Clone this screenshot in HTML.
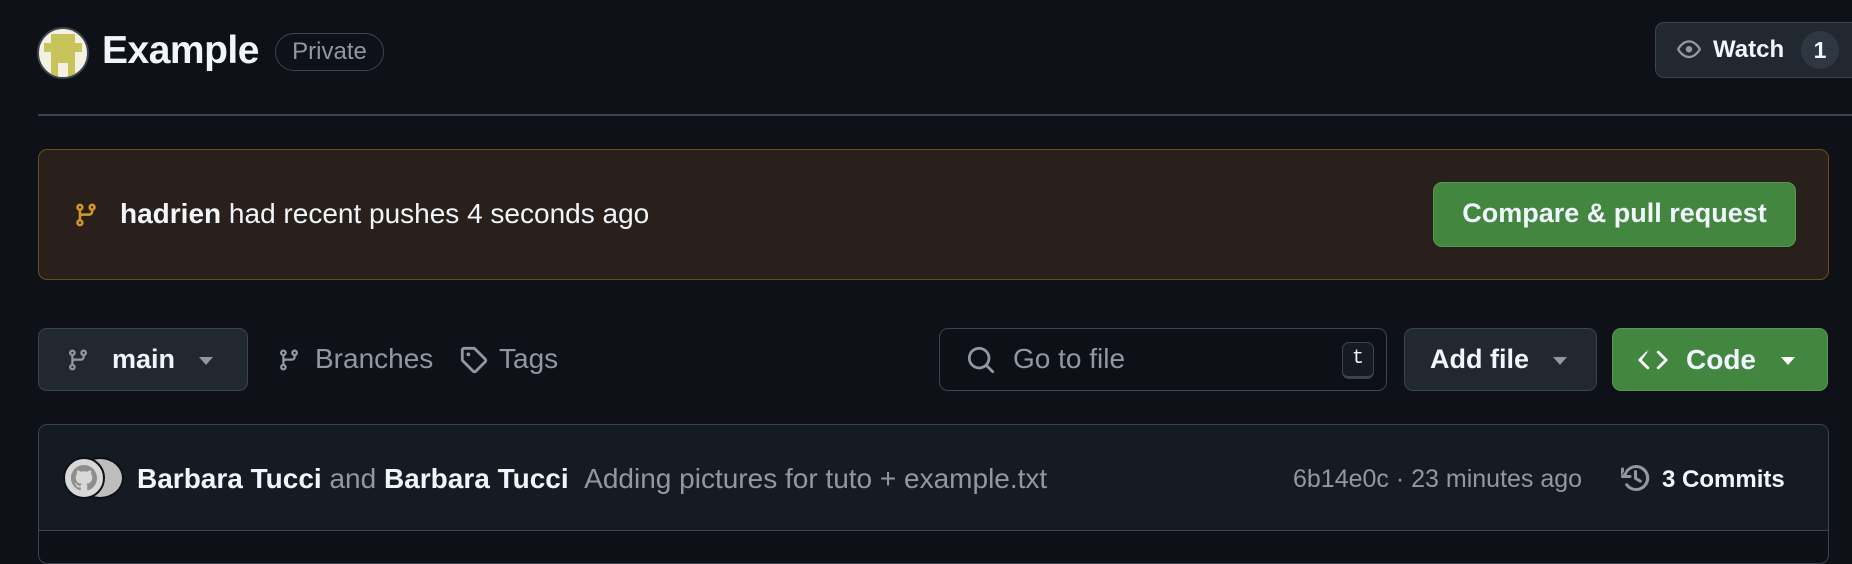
<!DOCTYPE html>
<html><head><meta charset="utf-8"><style>
*{box-sizing:border-box;margin:0;padding:0}
body{width:1852px;height:548px;background:#0e1117;font-family:"Liberation Sans",Arial,sans-serif;color:#f0f6fc;position:relative;overflow:hidden}
.a{position:absolute;white-space:nowrap}
.btn{position:absolute;border:1.5px solid #3d444d;background:#212830;border-radius:9px}
.caret{position:absolute;width:0;height:0;border-left:7px solid transparent;border-right:7px solid transparent;border-top:8px solid #9198a1}
</style></head><body>
<div class="a" style="left:37px;top:27px;width:52px;height:52px;border-radius:50%;background:#f3f1e4;border:2px solid #3d444d;overflow:hidden">
 <div class="a" style="left:12px;top:5px;width:24px;height:9px;background:#c9c35c"></div>
 <div class="a" style="left:5px;top:14px;width:38px;height:9px;background:#c9c35c"></div>
 <div class="a" style="left:12px;top:23px;width:24px;height:24px;background:#c9c35c"></div>
 <div class="a" style="left:19px;top:34px;width:10px;height:14px;background:#f3f1e4"></div>
</div>
<div class="a" style="left:102px;top:29px;font-size:39px;font-weight:bold;letter-spacing:-0.5px">Example</div>
<div class="a" style="left:275px;top:33px;width:109px;height:38px;border:1.5px solid #3d444d;border-radius:19px;color:#9198a1;font-size:24px;line-height:35px;text-align:center">Private</div>
<div class="btn" style="left:1655px;top:22px;width:210px;height:56px"></div>
<svg class="a" style="left:1674px;top:37px" width="30" height="26" viewBox="0 0 16 16"><path fill="#9198a1" d="M8 2c1.98 0 3.680 1 4.94 2.16.9.82 1.65 1.770 2.2 2.62.27.43.27.99 0 1.42-.55.85-1.3 1.8-2.2 2.62C11.68 12 9.98 13 8 13s-3.68-1-4.94-2.16A13.5 13.5 0 0 1 .86 8.21a1.3 1.3 0 0 1 0-1.42c.55-.85 1.3-1.8 2.2-2.62C4.32 3 6.02 2 8 2ZM2.12 7.5c.5.77 1.19 1.63 1.95 2.33C5.2 10.87 6.55 11.6 8 11.6s2.8-.73 3.93-1.770c.76-.7 1.45-1.56 1.95-2.33-.5-.77-1.19-1.63-1.95-2.33C10.8 4.13 9.45 3.4 8 3.4s-2.8.73-3.93 1.770c-.76.7-1.45 1.56-1.950 2.33ZM8 9.5a2 2 0 1 1 0-4 2 2 0 0 1 0 4Z"/></svg>
<div class="a" style="left:1713px;top:36px;font-size:24px;font-weight:bold">Watch</div>
<div class="a" style="left:1801px;top:31px;width:38px;height:38px;border-radius:50%;background:#2f3742;font-size:23px;font-weight:bold;text-align:center;line-height:38px">1</div>
<div class="a" style="left:38px;top:114px;width:1814px;height:2px;background:#3d444d"></div>
<div class="a" style="left:38px;top:149px;width:1791px;height:131px;background:#2a201b;border:1.5px solid #6a4d1c;border-radius:9px"></div>
<svg class="a" style="left:73px;top:200px" width="26" height="30" viewBox="0 0 16 16"><path fill="#d29922" d="M9.5 3.25a2.25 2.25 0 1 1 3 2.12V6A2.5 2.5 0 0 1 10 8.5H6a1 1 0 0 0-1 1v1.13a2.25 2.25 0 1 1-1.5 0V5.37a2.25 2.25 0 1 1 1.5 0v1.66A2.5 2.5 0 0 1 6 7h4a1 1 0 0 0 1-1v-.63A2.25 2.25 0 0 1 9.5 3.25Zm-6 0a.75.75 0 1 0 1.5 0 .75.75 0 0 0-1.5 0Zm8.25-.75a.75.75 0 1 0 0 1.5.75.75 0 0 0 0-1.5ZM4.25 12a.75.75 0 1 0 0 1.5.75.75 0 0 0 0-1.5Z"/></svg>
<div class="a" style="left:120px;top:198px;font-size:28px"><b>hadrien</b> had recent pushes 4 seconds ago</div>
<div class="a" style="left:1433px;top:182px;width:363px;height:65px;background:#438640;border:1.5px solid #55984f;border-radius:9px;font-size:27px;font-weight:bold;text-align:center;line-height:61px">Compare &amp; pull request</div>
<div class="btn" style="left:38px;top:328px;width:210px;height:63px"></div>
<svg class="a" style="left:66px;top:345px" width="24" height="30" viewBox="0 0 16 16"><path fill="#9198a1" d="M9.5 3.25a2.25 2.25 0 1 1 3 2.12V6A2.5 2.5 0 0 1 10 8.5H6a1 1 0 0 0-1 1v1.13a2.25 2.25 0 1 1-1.5 0V5.37a2.25 2.25 0 1 1 1.5 0v1.66A2.5 2.5 0 0 1 6 7h4a1 1 0 0 0 1-1v-.63A2.25 2.25 0 0 1 9.5 3.25Zm-6 0a.75.75 0 1 0 1.5 0 .75.75 0 0 0-1.5 0Zm8.25-.75a.75.75 0 1 0 0 1.5.75.75 0 0 0 0-1.5ZM4.25 12a.75.75 0 1 0 0 1.5.75.75 0 0 0 0-1.5Z"/></svg>
<div class="a" style="left:112px;top:344px;font-size:27px;font-weight:bold">main</div>
<div class="caret" style="left:199px;top:357px"></div>
<svg class="a" style="left:277px;top:345px" width="24" height="30" viewBox="0 0 16 16"><path fill="#9198a1" d="M9.5 3.25a2.25 2.25 0 1 1 3 2.12V6A2.5 2.5 0 0 1 10 8.5H6a1 1 0 0 0-1 1v1.13a2.25 2.25 0 1 1-1.5 0V5.37a2.25 2.25 0 1 1 1.5 0v1.66A2.5 2.5 0 0 1 6 7h4a1 1 0 0 0 1-1v-.63A2.25 2.25 0 0 1 9.5 3.25Zm-6 0a.75.75 0 1 0 1.5 0 .75.75 0 0 0-1.5 0Zm8.25-.75a.75.75 0 1 0 0 1.5.75.75 0 0 0 0-1.5ZM4.25 12a.75.75 0 1 0 0 1.5.75.75 0 0 0 0-1.5Z"/></svg>
<div class="a" style="left:315px;top:343px;font-size:28px;color:#9198a1">Branches</div>
<svg class="a" style="left:459px;top:345px" width="30" height="30" viewBox="0 0 16 16"><path fill="#9198a1" d="M1 7.78V2.75C1 1.78 1.78 1 2.75 1h5.03c.46 0 .91.18 1.24.51l5.5 5.5a1.75 1.75 0 0 1 0 2.47l-5.03 5.03a1.75 1.75 0 0 1-2.47 0l-5.5-5.5A1.75 1.75 0 0 1 1 7.78Zm1.5 0c0 .07.03.13.07.18l5.5 5.5a.25.25 0 0 0 .36 0l5.03-5.03a.25.25 0 0 0 0-.36l-5.5-5.5a.25.25 0 0 0-.18-.07H2.75a.25.25 0 0 0-.25.25ZM6 5a1 1 0 1 1-2 0 1 1 0 0 1 2 0Z"/></svg>
<div class="a" style="left:499px;top:343px;font-size:28px;color:#9198a1">Tags</div>
<div class="a" style="left:939px;top:328px;width:448px;height:63px;border:1.5px solid #3d444d;border-radius:9px;background:#0d1117"></div>
<svg class="a" style="left:966px;top:345px" width="30" height="30" viewBox="0 0 16 16"><path fill="#9198a1" d="M10.68 11.74a6 6 0 0 1-7.92-8.98 6 6 0 0 1 8.98 7.92l3.04 3.040a.75.75 0 0 1-1.06 1.06ZM11.5 7a4.5 4.5 0 1 0-9 0 4.5 4.5 0 0 0 9 0Z"/></svg>
<div class="a" style="left:1013px;top:343px;font-size:28px;color:#9198a1">Go to file</div>
<div class="a" style="left:1342px;top:342px;width:32px;height:37px;border:1.5px solid #3d444d;border-bottom-width:3px;border-radius:7px;background:#151b23;font-family:'Liberation Mono',monospace;font-size:20px;text-align:center;line-height:32px">t</div>
<div class="btn" style="left:1404px;top:328px;width:193px;height:63px"></div>
<div class="a" style="left:1430px;top:344px;font-size:27px;font-weight:bold">Add file</div>
<div class="caret" style="left:1553px;top:357px"></div>
<div class="a" style="left:1612px;top:328px;width:216px;height:63px;background:#438640;border:1.5px solid #55984f;border-radius:9px"></div>
<svg class="a" style="left:1638px;top:345px" width="30" height="30" viewBox="0 0 16 16"><path fill="#fff" d="m11.28 3.22 4.25 4.25a.75.75 0 0 1 0 1.06l-4.25 4.25a.75.75 0 0 1-1.06-1.06L13.94 8l-3.72-3.72a.75.75 0 0 1 1.06-1.06Zm-6.56 0a.75.75 0 0 1 0 1.06L2.06 8l3.72 3.72a.75.75 0 0 1-1.06 1.06L.47 8.53a.75.75 0 0 1 0-1.06l4.25-4.25a.75.75 0 0 1 1.060 0Z"/></svg>
<div class="a" style="left:1686px;top:344px;font-size:28px;font-weight:bold">Code</div>
<div class="caret" style="left:1781px;top:357px;border-top-color:#fff"></div>
<div class="a" style="left:38px;top:424px;width:1791px;height:140px;border:1.5px solid #3d444d;border-radius:9px;background:#0d1117;overflow:hidden">
 <div style="height:106px;background:#151b23;border-bottom:1.5px solid #3d444d"></div>
</div>
<div class="a" style="left:76px;top:457px;width:48px;height:42px;border-radius:50%;background:#bdbdbd;border:2px solid #0d1117"></div>
<div class="a" style="left:63px;top:457px;width:42px;height:42px;border-radius:50%;background:#d8d8d8;border:2px solid #0d1117"></div>
<svg class="a" style="left:71px;top:465px" width="26" height="26" viewBox="0 0 16 16"><path fill="#8e8e8e" d="M8 0c4.42 0 8 3.58 8 8a8 8 0 0 1-5.45 7.59c-.4.08-.55-.17-.55-.38 0-.27.01-1.13.01-2.2 0-.75-.25-1.23-.54-1.48 1.78-.2 3.65-.88 3.65-3.95 0-.88-.31-1.59-.82-2.15.08-.2.36-1.02-.08-2.12 0 0-.67-.22-2.2.82-.64-.18-1.32-.27-2-.27-.68 0-1.36.09-2 .27-1.53-1.03-2.2-.82-2.2-.82-.44 1.1-.16 1.92-.08 2.12-.51.56-.82 1.28-.82 2.15 0 3.06 1.86 3.75 3.64 3.95-.23.2-.44.55-.51 1.07-.46.21-1.61.55-2.33-.66-.15-.24-.6-.83-1.23-.82-.67.01-.27.38.01.53.34.19.73.9.82 1.13.16.45.68 1.31 2.69.94 0 .67.01 1.3.01 1.49 0 .21-.15.45-.55.38A7.995 7.995 0 0 1 0 8c0-4.42 3.58-8 8-8Z"/></svg>
<div class="a" style="left:137px;top:463px;font-size:28px;color:#9198a1"><b style="color:#f0f6fc">Barbara Tucci</b> and <b style="color:#f0f6fc">Barbara Tucci</b>&nbsp;&nbsp;Adding pictures for tuto + example.txt</div>
<div class="a" style="left:1293px;top:465px;font-size:25px;color:#9198a1">6b14e0c · 23 minutes ago</div>
<svg class="a" style="left:1620px;top:462px" width="32" height="32" viewBox="0 0 16 16"><path fill="#9198a1" d="m.43 7.12 1.58-1.48a.75.75 0 0 1 .1-.1A6.5 6.5 0 1 1 8 14.5a6.47 6.47 0 0 1-5.24-2.66.75.75 0 1 1 1.21-.88A5 5 0 1 0 3.24 6.5H5a.75.75 0 0 1 0 1.5H1.25a.75.75 0 0 1-.75-.75V3.5a.75.75 0 0 1 1.5 0v1.3ZM7.75 4a.75.75 0 0 1 .75.75v2.99l2.03 1.2a.75.75 0 0 1-.76 1.3l-2.4-1.42A.75.75 0 0 1 7 8.17V4.75A.75.75 0 0 1 7.75 4Z"/></svg>
<div class="a" style="left:1662px;top:466px;font-size:24px;font-weight:bold">3 Commits</div>
</body></html>
